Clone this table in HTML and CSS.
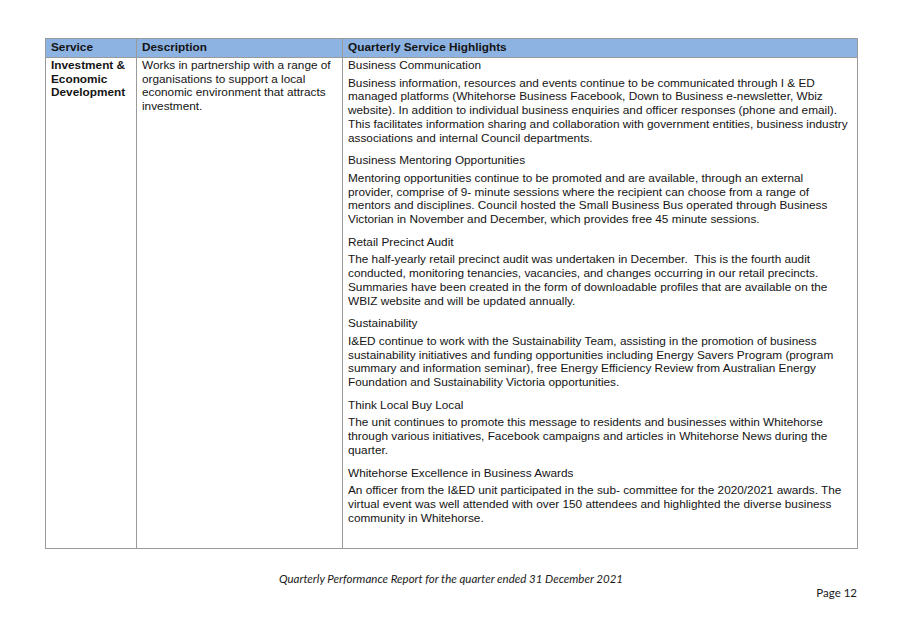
FILE: index.html
```html
<!DOCTYPE html>
<html>
<head>
<meta charset="utf-8">
<link rel="stylesheet" href="styles.css">
</head>
<body>
<div class="page">
  <table class="report">
    <colgroup>
      <col class="c1"><col class="c2"><col class="c3">
    </colgroup>
    <thead>
      <tr><th>Service</th><th>Description</th><th>Quarterly Service Highlights</th></tr>
    </thead>
    <tbody>
      <tr>
        <td class="svc">Investment &amp; Economic Development</td>
        <td class="desc">Works in partnership with a range of organisations to support a local economic environment that attracts investment.</td>
        <td class="hl">
          <div class="item">
            <p class="h">Business Communication</p>
            <p class="t">Business information, resources and events continue to be communicated through I &amp; ED managed platforms (Whitehorse Business Facebook, Down to Business e-newsletter, Wbiz website). In addition to individual business enquiries and officer responses (phone and email). This facilitates information sharing and collaboration with government entities, business industry associations and internal Council departments.</p>
          </div>
          <div class="item">
            <p class="h">Business Mentoring Opportunities</p>
            <p class="t">Mentoring opportunities continue to be promoted and are available, through an external provider, comprise of 9- minute sessions where the recipient can choose from a range of mentors and disciplines. Council hosted the Small Business Bus operated through Business Victorian in November and December, which provides free 45 minute sessions.</p>
          </div>
          <div class="item">
            <p class="h">Retail Precinct Audit</p>
            <p class="t">The half-yearly retail precinct audit was undertaken in December.&nbsp; This is the fourth audit conducted, monitoring tenancies, vacancies, and changes occurring in our retail precincts. Summaries have been created in the form of downloadable profiles that are available on the WBIZ website and will be updated annually.</p>
          </div>
          <div class="item">
            <p class="h">Sustainability</p>
            <p class="t">I&amp;ED continue to work with the Sustainability Team, assisting in the promotion of business sustainability initiatives and funding opportunities including Energy Savers Program (program summary and information seminar), free Energy Efficiency Review from Australian Energy Foundation and Sustainability Victoria opportunities.</p>
          </div>
          <div class="item">
            <p class="h">Think Local Buy Local</p>
            <p class="t">The unit continues to promote this message to residents and businesses within Whitehorse through various initiatives, Facebook campaigns and articles in Whitehorse News during the quarter.</p>
          </div>
          <div class="item last">
            <p class="h">Whitehorse Excellence in Business Awards</p>
            <p class="t">An officer from the I&amp;ED unit participated in the sub- committee for the 2020/2021 awards. The virtual event was well attended with over 150 attendees and highlighted the diverse business community in Whitehorse.</p>
          </div>
        </td>
      </tr>
    </tbody>
  </table>
  <p class="footer">Quarterly Performance Report for the quarter ended 31 December 2021</p>
  <p class="pageno">Page 12</p>
</div>
</body>
</html>
```
FILE: styles.css
```css
html, body {
  margin: 0;
  padding: 0;
  background: #ffffff;
}
body {
  width: 902px;
  height: 638px;
  overflow: hidden;
  font-family: "Liberation Sans", Arial, sans-serif;
  color: #141414;
}
.page {
  padding: 38px 45px 0 45px;
}
.report {
  width: 812px;
  border-collapse: collapse;
  table-layout: fixed;
  font-size: 11.8px;
  line-height: 13.7px;
}
.c1 { width: 91px; }
.c2 { width: 206px; }
.c3 { width: 515px; }
.report th, .report td {
  border: 1.5px solid #9a9a9a;
  vertical-align: top;
  text-align: left;
  padding: 0 3px 0 5px;
}
.report th {
  background: #8db3e2;
  font-weight: bold;
  height: 16px;
  padding-top: 2px;
  padding-bottom: 0;
}
.report td {
  padding-top: 1px;
  height: 489px;
}
.report td.hl {
  padding-right: 7px;
}
.svc { font-weight: bold; }
.hl p { margin: 0; }
.hl .h { margin-bottom: 4px; }
.hl .item { margin-bottom: 9px; }
.hl .item.last { margin-bottom: 0; }
.footer {
  margin: 23px 0 0 0;
  text-align: center;
  font-family: Lato, "Open Sans", sans-serif;
  font-style: italic;
  font-size: 11.5px;
  line-height: 14px;
  color: #1a1a1a;
}
.pageno {
  margin: 0;
  text-align: right;
  font-family: Lato, "Open Sans", sans-serif;
  font-size: 11.5px;
  line-height: 14px;
  color: #1a1a1a;
}
```
